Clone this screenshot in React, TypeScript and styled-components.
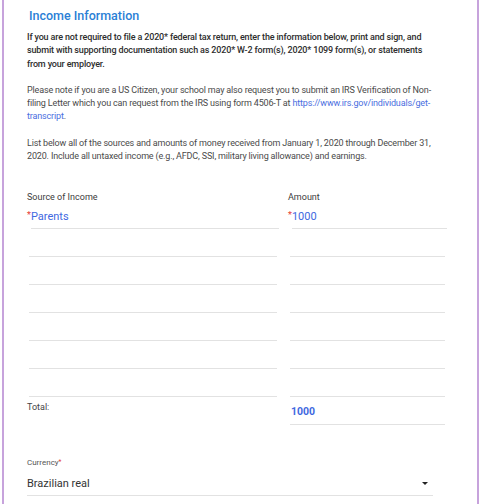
import React from 'react';
import styled, { createGlobalStyle } from 'styled-components';

const GlobalStyle = createGlobalStyle`
  body {
    margin: 0;
    background: #ffffff;
    font-family: Roboto, 'Liberation Sans', sans-serif;
  }
`;

const Frame = styled.div`
  box-sizing: border-box;
  margin-left: 2px;
  width: 477px;
  height: 504px;
  overflow: hidden;
  border-left: 2px solid #c7a3dc;
  border-right: 2px solid #c7a3dc;
  padding: 8px 0 0 23px;
`;

const Heading = styled.h2`
  margin: 0 0 7px 2px;
  font-size: 12.5px;
  line-height: 16px;
  font-weight: 500;
  color: #2b7fd6;
`;

const Para = styled.p<{ $strong?: boolean }>`
  margin: 0 0 13px;
  width: 440px;
  white-space: nowrap;
  font-size: 9px;
  line-height: 13.3px;
  letter-spacing: -0.16px;
  font-weight: ${(p) => (p.$strong ? 500 : 400)};
  color: ${(p) => (p.$strong ? '#2e2e2e' : '#4a4a4a')};
`;

const Link = styled.a`
  color: #4a6ee0;
  text-decoration: none;
`;

const Table = styled.div`
  display: grid;
  grid-template-columns: 252px 159px;
  column-gap: 9px;
  margin-top: 28px;
`;

const ColLabel = styled.div`
  font-size: 9px;
  line-height: 12px;
  color: #3c3c3c;
  height: 12px;
`;

const Cell = styled.div<{ $first?: boolean }>`
  box-sizing: border-box;
  height: 28px;
  position: relative;
  font-size: 11px;
  line-height: 14px;
  &::after {
    content: '';
    position: absolute;
    left: ${(p) => (p.$first ? '4px' : '2px')};
    right: ${(p) => (p.$first ? '0' : '2px')};
    bottom: 0;
    height: 1.5px;
    background: #e2e2e2;
  }
`;

const FirstCell = styled(Cell)`
  height: 26px;
  padding-top: 7px;
`;

const Value = styled.span<{ $bold?: boolean }>`
  font-size: ${(p) => (p.$bold ? '10.5px' : '11px')};
  font-weight: ${(p) => (p.$bold ? 700 : 400)};
  line-height: 14px;
  color: #4169df;
`;

const Req = styled.span`
  color: #e53935;
  font-size: 0.82em;
  line-height: 1;
  vertical-align: 0.2em;
`;

const TotalLabel = styled.div`
  font-size: 9px;
  color: #444;
  padding-top: 5px;
`;

const TotalCell = styled(Cell)`
  padding: 8px 0 0 3px;
`;

const CurrencyBlock = styled.div`
  margin-top: 33px;
  width: 406px;
`;

const SmallLabel = styled.div`
  font-size: 8px;
  line-height: 10px;
  color: #555;
`;

const Select = styled.div`
  display: flex;
  align-items: center;
  justify-content: space-between;
  height: 24px;
  margin-top: 3px;
  padding-right: 5px;
  border-bottom: 1.5px solid #e2e2e2;
  font-size: 11px;
  color: #333;
`;

const Caret = styled.span`
  width: 0;
  height: 0;
  border-left: 3px solid transparent;
  border-right: 3px solid transparent;
  border-top: 3px solid #222;
`;

const EMPTY_ROWS = 6;

export default function App() {
  return (
    <>
      <GlobalStyle />
      <Frame>
        <Heading>Income Information</Heading>
        <Para $strong>
          If you are not required to file a 2020* federal tax return, enter the information below, print and sign, and
          <br />
          submit with supporting documentation such as 2020* W-2 form(s), 2020* 1099 form(s), or statements
          <br />
          from your employer.
        </Para>
        <Para>
          Please note if you are a US Citizen, your school may also request you to submit an IRS Verification of Non-
          <br />
          filing Letter which you can request from the IRS using form 4506-T at{' '}
          <Link href="#">
            https://www.irs.gov/individuals/get-
            <br />
            transcript
          </Link>
          .
        </Para>
        <Para>
          List below all of the sources and amounts of money received from January 1, 2020 through December 31,
          <br />
          2020. Include all untaxed income (e.g., AFDC, SSI, military living allowance) and earnings.
        </Para>

        <Table>
          <ColLabel>Source of Income</ColLabel>
          <ColLabel>Amount</ColLabel>
          <FirstCell $first>
            <Req>*</Req>
            <Value>Parents</Value>
          </FirstCell>
          <FirstCell $first>
            <Req>*</Req>
            <Value>1000</Value>
          </FirstCell>
          {Array.from({ length: EMPTY_ROWS }).map((_, i) => (
            <React.Fragment key={i}>
              <Cell />
              <Cell />
            </React.Fragment>
          ))}
          <TotalLabel>Total:</TotalLabel>
          <TotalCell>
            <Value $bold>1000</Value>
          </TotalCell>
        </Table>

        <CurrencyBlock>
          <SmallLabel>
            Currency<Req>*</Req>
          </SmallLabel>
          <Select>
            Brazilian real
            <Caret />
          </Select>
        </CurrencyBlock>
      </Frame>
    </>
  );
}
